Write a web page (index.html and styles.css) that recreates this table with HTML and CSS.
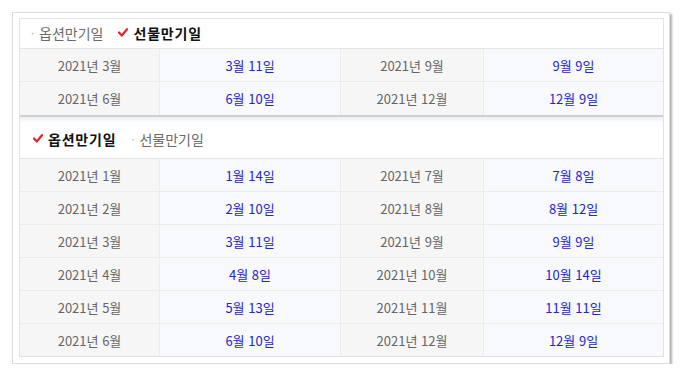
FILE: index.html
```html
<!DOCTYPE html>
<html lang="ko">
<head>
<meta charset="utf-8">
<link rel="stylesheet" href="styles.css">
</head>
<body>
<div class="frame">
  <div class="box">
    <section class="sec">
      <div class="tabs tabs-first">
        <span class="tab off"><span class="dot">·</span>옵션만기일</span>
        <span class="tab on"><svg class="chk" viewBox="0 0 10 9" width="10" height="9"><path d="M1 4.5 L3.8 7.5 L9 1.2" fill="none" stroke="#e3232b" stroke-width="2.2" stroke-linecap="round" stroke-linejoin="round"/></svg>선물만기일</span>
      </div>
      <div class="row"><div class="c y">2021년 3월</div><div class="c d">3월 11일</div><div class="c y">2021년 9월</div><div class="c d">9월 9일</div></div>
      <div class="row"><div class="c y">2021년 6월</div><div class="c d">6월 10일</div><div class="c y">2021년 12월</div><div class="c d">12월 9일</div></div>
    </section>
    <section class="sec sec2">
      <div class="tabs tabs-second">
        <span class="tab on"><svg class="chk" viewBox="0 0 10 9" width="10" height="9"><path d="M1 4.5 L3.8 7.5 L9 1.2" fill="none" stroke="#e3232b" stroke-width="2.2" stroke-linecap="round" stroke-linejoin="round"/></svg>옵션만기일</span>
        <span class="tab off"><span class="dot">·</span>선물만기일</span>
      </div>
      <div class="row"><div class="c y">2021년 1월</div><div class="c d">1월 14일</div><div class="c y">2021년 7월</div><div class="c d">7월 8일</div></div>
      <div class="row"><div class="c y">2021년 2월</div><div class="c d">2월 10일</div><div class="c y">2021년 8월</div><div class="c d">8월 12일</div></div>
      <div class="row"><div class="c y">2021년 3월</div><div class="c d">3월 11일</div><div class="c y">2021년 9월</div><div class="c d">9월 9일</div></div>
      <div class="row"><div class="c y">2021년 4월</div><div class="c d">4월 8일</div><div class="c y">2021년 10월</div><div class="c d">10월 14일</div></div>
      <div class="row"><div class="c y">2021년 5월</div><div class="c d">5월 13일</div><div class="c y">2021년 11월</div><div class="c d">11월 11일</div></div>
      <div class="row last"><div class="c y">2021년 6월</div><div class="c d">6월 10일</div><div class="c y">2021년 12월</div><div class="c d">12월 9일</div></div>
    </section>
  </div>
</div>
</body>
</html>
```

FILE: styles.css
```css
html, body {
  margin: 0;
  padding: 0;
  background: #ffffff;
}
body {
  font-family: "Noto Sans CJK KR", "Noto Sans", sans-serif;
  font-size: 13px;
  color: #666;
}
.frame {
  margin: 12px 0 0 12px;
  width: 658px;
  padding: 5px 5px 6px 6px;
  border: 1px solid #dcdcdc;
  box-shadow: 2px 2px 2px #b0b0b0;
  box-sizing: border-box;
}
.box {
  border: 1px solid #e2e2e2;
  background: #fff;
}
.tabs {
  display: flex;
  align-items: center;
  gap: 15px;
  border-bottom: 1px solid #e4e4e4;
  box-sizing: border-box;
  font-size: 14px;
}
.tabs-first {
  height: 30px;
  padding: 0 0 2px 11px;
}
.tabs-second {
  height: 42px;
  padding: 2px 0 0 13px;
  background: linear-gradient(#eceef1 0px, #ffffff 6px);
}
.tab {
  display: inline-flex;
  align-items: center;
  line-height: 18px;
}
.tab.off {
  color: #6a6a6a;
}
.tab.on {
  color: #111;
  font-weight: 700;
  letter-spacing: 0.8px;
}
.dot {
  color: #aaa;
  margin-right: 5px;
  font-size: 11px;
}
.chk {
  margin-right: 5px;
}
.sec2 {
  border-top: 2px solid #cfd0d3;
}
.row {
  display: grid;
  grid-template-columns: 140px 181px 143px 1fr;
  height: 33px;
  border-bottom: 1px solid #ebebeb;
  box-sizing: border-box;
}
.row.last {
  border-bottom: none;
  height: 32px;
}
.sec:first-child .row:last-child {
  border-bottom: none;
}
.c {
  display: flex;
  align-items: center;
  justify-content: center;
  border-right: 1px solid #ebebeb;
}
.c:last-child {
  border-right: none;
}
.y {
  background: #f6f6f7;
  color: #666;
}
.d {
  background: #f8f9fc;
  color: #2525c8;
}
```
